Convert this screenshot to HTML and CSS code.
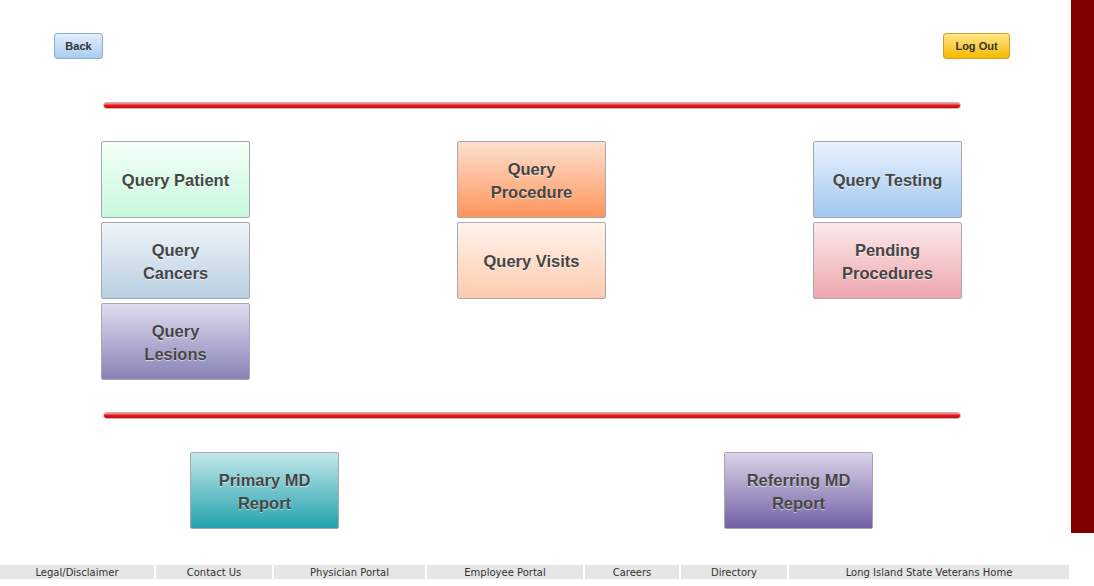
FILE: index.html
```html
<!DOCTYPE html>
<html lang="en">
<head>
  <meta charset="UTF-8" />
  <title>Query Menu</title>
  <link rel="stylesheet" href="styles.css">
</head>
<body>
  <div class="page">
    <div class="main">
      <div class="topbar">
        <button class="btn btn-back">Back</button>
        <button class="btn btn-logout">Log Out</button>
      </div>

      <div class="rule"></div>

      <div class="tile-grid">
        <div class="tile-col">
          <a class="tile patient">Query Patient</a>
          <a class="tile cancers">Query<br>Cancers</a>
          <a class="tile lesions">Query<br>Lesions</a>
        </div>
        <div class="tile-col">
          <a class="tile procedure">Query<br>Procedure</a>
          <a class="tile visits">Query Visits</a>
        </div>
        <div class="tile-col">
          <a class="tile testing">Query Testing</a>
          <a class="tile pending">Pending<br>Procedures</a>
        </div>
      </div>

      <div class="rule rule-low"></div>

      <div class="report-row">
        <a class="tile primary">Primary MD<br>Report</a>
        <a class="tile referring">Referring MD<br>Report</a>
      </div>
    </div>
    <div class="side"></div>
  </div>

  <ul class="footer">
    <li style="width:154px">Legal/Disclaimer</li>
    <li style="width:116px">Contact Us</li>
    <li style="width:151px">Physician Portal</li>
    <li style="width:156px">Employee Portal</li>
    <li style="width:94px">Careers</li>
    <li style="width:106px">Directory</li>
    <li style="width:280px">Long Island State Veterans Home</li>
  </ul>
</body>
</html>
```

FILE: styles.css
```css
body, html {
  margin: 0; padding: 0;
  background: #fff;
  font-family: "Liberation Sans", Arial, sans-serif;
  color: #444;
}
.page {
  display: flex;
  align-items: flex-start;
}
.main {
  width: 1071px;
}
.side {
  width: 23px;
  height: 533px;
  background: #800000;
}
.topbar {
  display: flex;
  justify-content: space-between;
  padding: 33px 61px 0 54px;
}
.btn {
  height: 26px;
  padding: 0 10px;
  font-family: "Liberation Sans", Arial, sans-serif;
  font-size: 11px;
  font-weight: bold;
  color: #333;
  border-radius: 3px;
  box-sizing: border-box;
}
.btn-back {
  width: 49px;
  background: linear-gradient(to bottom, #e3eefa, #a8ccf1);
  border: 1px solid #8eaccc;
}
.btn-logout {
  width: 67px;
  background: linear-gradient(to bottom, #ffe68a, #f6b900);
  border: 1px solid #cfa227;
}
.rule {
  margin: 43px 0 0 103px;
  width: 858px;
  height: 7px;
  box-sizing: border-box;
  border: 1px solid #b9b9b9;
  border-radius: 4px;
  background: linear-gradient(to bottom, #ff9a9a, #e8161b 50%, #c80a10);
}
.rule-low {
  margin-top: 32px;
}
.tile-grid {
  display: flex;
  justify-content: space-between;
  width: 861px;
  margin: 32px 0 0 101px;
}
.tile-col {
  display: flex;
  flex-direction: column;
  gap: 4px;
  width: 149px;
}
.tile {
  display: flex;
  align-items: center;
  justify-content: center;
  text-align: center;
  height: 77px;
  width: 149px;
  padding-top: 2px;
  box-sizing: border-box;
  border: 1px solid #a8a8a8;
  border-radius: 2px;
  font-size: 16.5px;
  font-weight: bold;
  line-height: 23px;
  color: #464646;
  text-shadow: 0 1px 1px rgba(255,255,255,0.6);
}
.patient   { background: linear-gradient(to bottom, #f3fff8, #c8f8dd); }
.cancers   { background: linear-gradient(to bottom, #f0f4f9, #b8cfe1); }
.lesions   { background: linear-gradient(to bottom, #dedded, #8782b8); }
.procedure { background: linear-gradient(to bottom, #fde0cf, #fd955c); }
.visits    { background: linear-gradient(to bottom, #fff3ec, #fdcbae); }
.testing   { background: linear-gradient(to bottom, #e9f2fc, #a1c7f0); }
.pending   { background: linear-gradient(to bottom, #fbe9eb, #eea7ae); }
.primary   { background: linear-gradient(to bottom, #c3e7ea, #21a2ad); }
.referring { background: linear-gradient(to bottom, #dad3e8, #7260a5); }
.report-row {
  display: flex;
  justify-content: space-between;
  width: 683px;
  margin: 33px 0 0 190px;
}
.footer {
  display: flex;
  gap: 2px;
  list-style: none;
  margin: 32px 0 0 0;
  padding: 0;
}
.footer li {
  height: 14px;
  line-height: 15px;
  background: #e6e6e6;
  text-align: center;
  font-family: "DejaVu Sans", Verdana, sans-serif;
  font-size: 10px;
  color: #333;
}
```
